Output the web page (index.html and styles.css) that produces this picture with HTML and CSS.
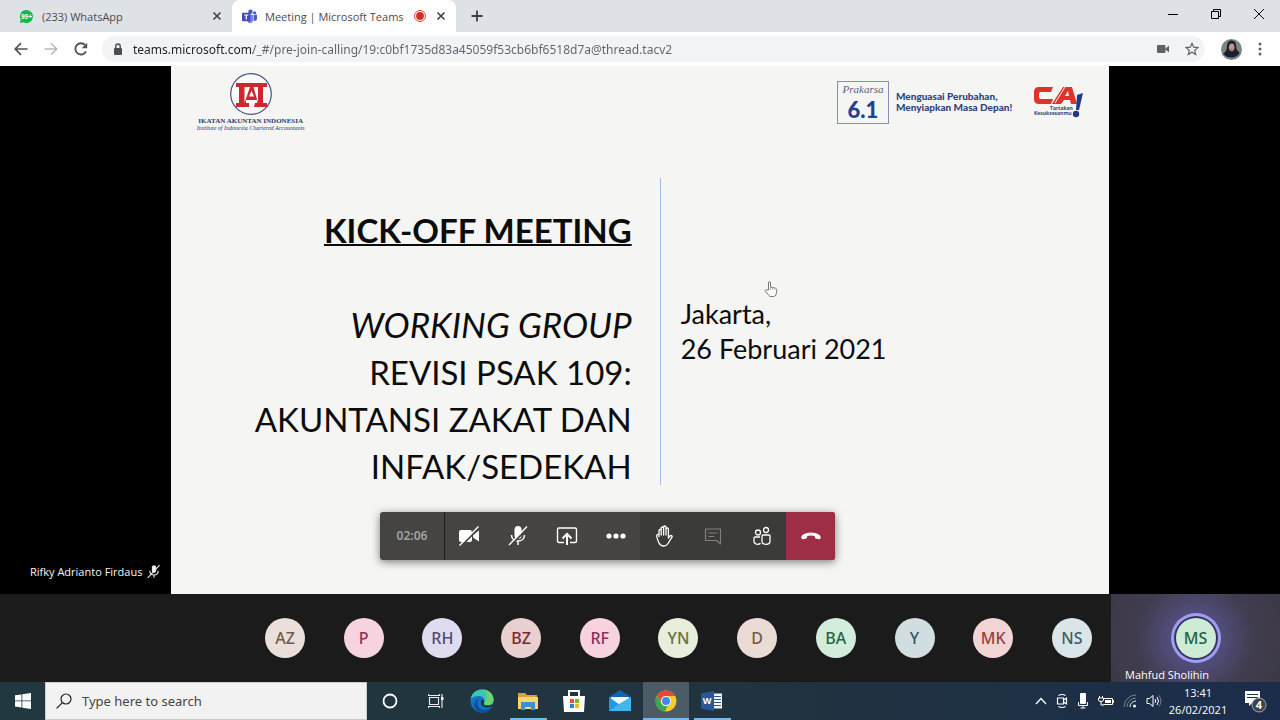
FILE: index.html
```html
<!DOCTYPE html>
<html lang="en">
<head>
  <meta charset="UTF-8">
  <meta name="viewport" content="width=device-width, initial-scale=1.0">
  <title>Meeting | Microsoft Teams</title>
  <link rel="stylesheet" href="styles.css">
</head>
<body>

  <!-- browser tabs -->
  <header class="tab-strip">
    <div class="tab">
      <svg class="tab-icon" viewBox="0 0 16 16"><path d="M8 1a7 7 0 1 1-3.300 13.200L1 15l.9-3.500A7 7 0 0 1 8 1z" fill="#12b84a"/><text x="8" y="11" class="badge-text">99+</text></svg>
      <span class="tab-title">(233) WhatsApp</span>
      <button class="icon-btn" aria-label="Close tab"><svg width="10" height="10" viewBox="0 0 10 10"><path d="M1.500 1.500l7 7m0-7l-7 7" stroke="#3c4043" stroke-width="1.600"/></svg></button>
    </div>
    <div class="tab active">
      <svg class="tab-icon" viewBox="0 0 16 16"><circle cx="9" cy="3" r="2.400" fill="#5059c9"/><circle cx="13.500" cy="4" r="1.700" fill="#5059c9"/><path d="M6 6h6v6a3.500 3.500 0 0 1-6 2z" fill="#7b83eb"/><path d="M12.500 6H16v4.500a2.500 2.500 0 0 1-3.500 2z" fill="#5059c9"/><rect y="4" width="9" height="9" rx="1" fill="#444bb8"/><path d="M2.300 6.400h4.500M4.550 6.400v4.800" stroke="#fff" stroke-width="1.300"/></svg>
      <span class="tab-title">Meeting | Microsoft Teams</span>
      <svg class="rec" width="12" height="12" viewBox="0 0 12 12"><circle cx="6" cy="6" r="5.500" fill="#fff" stroke="#d93025" stroke-width=".9"/><circle cx="6" cy="6" r="3.900" fill="#d32d24"/></svg>
      <button class="icon-btn" aria-label="Close tab"><svg width="10" height="10" viewBox="0 0 10 10"><path d="M1.500 1.500l7 7m0-7l-7 7" stroke="#3c4043" stroke-width="1.600"/></svg></button>
    </div>
    <button class="icon-btn new-tab" aria-label="New tab"><svg width="12" height="12" viewBox="0 0 12 12"><path d="M6 .5v11M.5 6h11" stroke="#3c4043" stroke-width="1.800"/></svg></button>
    <div class="window-btns">
      <button aria-label="Minimize"><svg width="10" height="10" viewBox="0 0 10 10"><path d="M0 5.500h10" stroke="#000"/></svg></button>
      <button aria-label="Restore"><svg width="10" height="10" viewBox="0 0 10 10"><path d="M.5 2.500h7v7h-7zM2.500 2.500v-2h7v7h-2" fill="none" stroke="#000"/></svg></button>
      <button aria-label="Close"><svg width="10" height="10" viewBox="0 0 10 10"><path d="M0 0l10 10M10 0L0 10" stroke="#000"/></svg></button>
    </div>
  </header>

  <nav class="toolbar">
    <button class="icon-btn" aria-label="Back"><svg width="14" height="14" viewBox="0 0 14 14"><path d="M13.500 7H1.500M7 1.200L1.200 7 7 12.800" fill="none" stroke="#505357" stroke-width="1.700"/></svg></button>
    <button class="icon-btn" aria-label="Forward"><svg width="14" height="14" viewBox="0 0 14 14"><path d="M.5 7h12M7 1.200L12.800 7 7 12.800" fill="none" stroke="#b4b6b9" stroke-width="1.500"/></svg></button>
    <button class="icon-btn" aria-label="Reload"><svg width="14" height="14" viewBox="0 0 14 14"><path d="M12 9.300A5.600 5.600 0 1 1 11.200 3.200" fill="none" stroke="#505357" stroke-width="1.800"/><path d="M13.200.8v5.400H7.800z" fill="#505357"/></svg></button>
    <div class="address">
      <svg width="10" height="12" viewBox="0 0 10 12"><rect x="1" y="5" width="8" height="7" rx="1" fill="#4a4d51"/><path d="M2.800 5.500V3.200a2.200 2.200 0 0 1 4.400 0v2.300" fill="none" stroke="#4a4d51" stroke-width="1.400"/></svg>
      <input class="url" type="text" aria-label="Address" value="teams.microsoft.com/_#/pre-join-calling/19:c0bf1735d83a45059f53cb6bf6518d7a@thread.tacv2">
      <button class="icon-btn" aria-label="Camera in use"><svg width="12" height="8" viewBox="0 0 12 8"><rect width="8.500" height="8" rx="1" fill="#5f6368"/><path d="M8 4l4-3.500v7z" fill="#5f6368"/></svg></button>
      <button class="icon-btn" aria-label="Bookmark"><svg width="14" height="14" viewBox="0 0 14 14"><path d="M7 1.300l1.700 3.900 4.200.4-3.200 2.800 1 4.100L7 10.300l-3.700 2.200 1-4.100L1.100 5.600l4.200-.4z" fill="none" stroke="#5f6368" stroke-width="1.200"/></svg></button>
    </div>
    <button class="icon-btn profile" aria-label="Profile"><svg width="21" height="21" viewBox="0 0 21 21"><circle cx="10.500" cy="10.500" r="10.500" fill="#7c8582"/><path d="M10.500 1.500c3.500 0 4.800 3 4.700 7 .2 2.500 2.500 4 3.500 5.500a10.500 10.500 0 0 1-16.500 1C4 13 6 11.500 6 8c0-4 1.500-6.500 4.500-6.500z" fill="#18212d"/><ellipse cx="10.700" cy="8.300" rx="2.800" ry="3.900" fill="#c69783"/><path d="M9 10.300q1.700 1 3.300 0" stroke="#843e3b" fill="none" stroke-width=".7"/></svg></button>
    <button class="icon-btn" aria-label="Menu"><svg width="4" height="14" viewBox="0 0 4 14"><g fill="#5f6368"><circle cx="2" cy="2" r="1.500"/><circle cx="2" cy="7" r="1.500"/><circle cx="2" cy="12" r="1.500"/></g></svg></button>
  </nav>

  <main class="stage">
    <div class="presenter">Rifky Adrianto Firdaus
      <svg width="14" height="15" viewBox="0 0 20 20"><rect x="7" y="1" width="6" height="11" rx="3" fill="#eee"/><path d="M4 9c0 8 12 8 12 0M10 15v4M1 19L18 1" fill="none" stroke="#eee" stroke-width="1.500"/></svg>
    </div>
    <article class="slide">
      <div class="slide-head">
        <div class="iai">
          <svg width="42" height="42" viewBox="0 0 42 42"><circle cx="21" cy="21" r="20.300" fill="#fafafa" stroke="#3f4f83" stroke-width="1.200"/><path d="M6 10h31v4h-4v16h4v4H25v-4h2v-3H16v3h2v4H6v-4h3V14H6z" fill="#cf2730"/><path d="M15.500 14H20L14.500 30V14zM23.500 14H28v16z" fill="#fafafa"/><path d="M21.500 17.500l-2.500 6h5z" fill="#fafafa"/><path d="M18 27h7v7h-7z" fill="#fafafa"/><path d="M16 30h3v4h-4zM25 30h3v4h-4z" fill="#cf2730"/></svg>
          <strong>IKATAN AKUNTAN INDONESIA</strong>
          <em>Institute of Indonesia Chartered Accountants</em>
        </div>
        <div class="prakarsa">
          <em>Prakarsa</em>
          <strong>6.1</strong>
        </div>
        <p class="motto">Menguasai Perubahan,<br>Menyiapkan Masa Depan!</p>
        <div class="ca">
          <svg width="52" height="34" viewBox="0 0 52 34"><path d="M21 1H7Q2 1 2 6v7q0 5 5 5h12l2-5H9q-2 0-2-2V8q0-2 2-2h10z" fill="#df3329"/><path d="M20 18L31 1h9l5 17h-6l-1-4h-6l-3 4zM33 10h4l-1-5z" fill="#df3329"/><path d="M23 17L33 1" stroke="#f5f5f3" stroke-width="1"/><path d="M45 9l6-2-4 17h-3z" fill="#1f3b83"/><circle cx="44" cy="28" r="3.200" fill="#1f3b83"/><text x="18" y="24" class="ca-text">Tortakan</text><text x="2" y="29" class="ca-text">Kesuksesanmu</text></svg>
        </div>
      </div>
      <div class="slide-body">
        <div class="topic">
          <h1>KICK-OFF MEETING</h1>
          <p><i>WORKING GROUP</i><br>REVISI PSAK 109:<br>AKUNTANSI ZAKAT DAN<br>INFAK/SEDEKAH</p>
        </div>
        <p class="place">Jakarta,<br>26 Februari 2021</p>
      </div>
      <svg class="pointer" width="14" height="17" viewBox="0 0 14 17"><path d="M4.500 9V2q0-1.300 1-1.300t1 1.300v4l5 1.200q1.500.5 1.300 2.300l-.8 4q-.5 2-2.500 2H7q-1.300 0-2-1L1 9.700q.5-1.500 2-.8z" fill="#fff" stroke="#777"/><path d="M6.500 6v3M8.800 6.800V9M11 7.400V9" stroke="#999" stroke-width=".7"/></svg>
    </article>

    <div class="controls">
      <time>02:06</time>
      <button aria-label="Turn camera on"><svg width="22" height="22" viewBox="0 0 22 22"><rect x="1" y="5" width="13" height="12" rx="2" fill="#fff"/><path d="M15 9.500L21 5.500v11l-6-4z" fill="#fff"/><path d="M2.500 21.500L21.500 2.500" stroke="#454442" stroke-width="2"/><path d="M1.500 20.500L20.500 1.500" stroke="#fff" stroke-width="1.400"/></svg></button>
      <button aria-label="Unmute"><svg width="22" height="22" viewBox="0 0 22 22"><rect x="7.500" y="1" width="7" height="13" rx="3.500" fill="#fff"/><path d="M4.500 10c0 8 13 8 13 0M11 16v4" fill="none" stroke="#fff" stroke-width="1.500"/><path d="M3 21L21 3" stroke="#454442" stroke-width="1.800"/><path d="M2 20L20 1.500" stroke="#fff" stroke-width="1.400"/></svg></button>
      <button aria-label="Share"><svg width="22" height="22" viewBox="0 0 22 22"><path d="M8 17.500H3q-1.500 0-1.500-1.500V4.500Q1.500 3 3 3h16q1.500 0 1.500 1.500V16q0 1.500-1.500 1.500h-5" fill="none" stroke="#fff" stroke-width="1.400"/><path d="M11 20V9.500M6.500 13.500L11 9l4.500 4.500" fill="none" stroke="#fff" stroke-width="2"/></svg></button>
      <button aria-label="More"><svg width="20" height="6" viewBox="0 0 20 6"><g fill="#fff"><circle cx="3" cy="3" r="2.600"/><circle cx="10" cy="3" r="2.600"/><circle cx="17" cy="3" r="2.600"/></g></svg></button>
      <button class="dark" aria-label="Raise hand"><svg width="20" height="22" viewBox="0 0 20 22"><path d="M5 12V5.500q0-1.200 1.100-1.200T7.200 5.500V10 3.200Q7.200 2 8.400 2t1.200 1.200V10 2.200Q9.600 1 10.800 1T12 2.200V10 4.200Q12 3 13.200 3t1.200 1.200V13l1.500-2q1-1 2.100 0 .4.500 0 1.200l-4 6.300Q12.500 21 9.700 21 6.500 21 5 18q-2-4-2.300-7Q2.600 9 5 9.500" fill="none" stroke="#fff" stroke-width="1.300" stroke-linejoin="round"/></svg></button>
      <button class="dark" aria-label="Chat"><svg width="18" height="18" viewBox="0 0 18 18"><path d="M1.500 2h15v15l-4-3.500h-11zM4.500 6h9M4.500 9.500h6" fill="none" stroke="#817f7d" stroke-width="1.200" stroke-linejoin="round"/></svg></button>
      <button class="dark" aria-label="Participants"><svg width="18" height="20" viewBox="0 0 18 20"><g fill="none" stroke="#fff" stroke-width="1.300"><circle cx="5" cy="6.500" r="2.500"/><circle cx="13" cy="4" r="2.500"/><path d="M7 11H2q-1 0-1 1v3q0 3 3.500 3.300 2 0 3-1"/><path d="M10 9h6q1 0 1 1v5.500q0 2.800-4 2.800t-4-2.800V10q0-1 1-1z"/></g></svg></button>
      <button class="hang-up" aria-label="Leave"><svg width="20" height="8" viewBox="0 0 20 8"><path d="M10 .5q5.500 0 8.500 2.500 2 2 .8 3.600-.5.800-1.500.6l-3-.7q-1-.2-1-1.200V4Q10 3 6.200 4v1.300q0 1-1 1.200l-3 .7q-1 .2-1.500-.6Q-.5 5 1.500 3 4.500.5 10 .5z" fill="#fff"/></svg></button>
    </div>
  </main>

  <section class="roster">
    <ul class="people">
      <li class="avatar sand">AZ</li>
      <li class="avatar pink">P</li>
      <li class="avatar lilac">RH</li>
      <li class="avatar rose">BZ</li>
      <li class="avatar pink">RF</li>
      <li class="avatar lime">YN</li>
      <li class="avatar beige">D</li>
      <li class="avatar mint">BA</li>
      <li class="avatar steel">Y</li>
      <li class="avatar salmon">MK</li>
      <li class="avatar mist">NS</li>
    </ul>
    <div class="speaker">
      <span class="avatar speaking">MS</span>
      <span class="speaker-name">Mahfud Sholihin</span>
    </div>
  </section>

  <footer class="taskbar">
    <button class="start" aria-label="Start"><svg width="16" height="16" viewBox="0 0 16 16"><path d="M0 2.300L6.500 1.400v6.100H0zM7.300 1.300L16 0v7.500H7.300zM0 8.300h6.500v6.200L0 13.600zM7.300 8.300H16V16l-8.700-1.300z" fill="#fff"/></svg></button>
    <label class="search">
      <svg width="16" height="16" viewBox="0 0 16 16"><circle cx="10" cy="6" r="5" fill="none" stroke="#222" stroke-width="1.200"/><path d="M6.400 9.600L.6 15.400" stroke="#222" stroke-width="1.300"/></svg>
      <input type="text" placeholder="Type here to search" aria-label="Search">
    </label>
    <div class="apps">
      <button aria-label="Cortana"><svg width="16" height="16" viewBox="0 0 16 16"><circle cx="8" cy="8" r="6.500" fill="none" stroke="#fff" stroke-width="1.800"/></svg></button>
      <button aria-label="Task view"><svg width="16" height="16" viewBox="0 0 16 16"><path d="M1.500 4.500h9v7h-9zM.5 1v1.500h11V1M.5 15v-1.500h11V15M14 1v14" fill="none" stroke="#eee" stroke-width="1.100"/><rect x="13" y="4" width="2.500" height="3" fill="#fff"/></svg></button>
      <button aria-label="Edge"><svg width="24" height="24" viewBox="0 0 24 24"><circle cx="12" cy="12" r="11.500" fill="#1473c8"/><path d="M.7 10C2 3 7 .5 12 .5c7 0 11.500 5 11.500 10 0 4-3 6-6 6-3 0-4.500-1-3.500-2.500 2-3-.5-7-5-7-4 0-7 1.500-8.300 3z" fill="#3bc6b5"/><path d="M13 .6c6.500.4 10.500 5 10.500 9.900 0 4-3 6-6 6-3 0-4.500-1-3.500-2.500C18 10 18 5 13 .6z" fill="#66d56c"/><path d="M9 10c-3 4-.5 11 5 11 3.500 0 6-1 8-3-2 4-6 5.500-10 5.500C6 23.500 3 18 4.500 14 5.500 11.500 7 10 9 10z" fill="#124f9a"/><path d="M12 10.500c-3 3 0 8 5 8 3 0 4-.7 5-1.300l1.500 1L24 15l-4 1c-4 1-7-.2-6-2 .8-1.300-.5-3.500-2-3.500z" fill="#21363f"/></svg></button>
      <button class="running" aria-label="File Explorer"><svg width="22" height="20" viewBox="0 0 22 20"><path d="M1 2h7l2 2h10v14H1z" fill="#d9a13b"/><path d="M1 6h20v12H1z" fill="#ffd76b"/><path d="M4 11h14v8h-4v-3H8v3H4z" fill="#3d8fd3"/></svg></button>
      <button aria-label="Store"><svg width="22" height="24" viewBox="0 0 22 24"><path d="M6 8V2h10v6" fill="none" stroke="#fff" stroke-width="2"/><path d="M0 7h22l-1 16H1z" fill="#fff"/><path fill="#e94f35" d="M7 10h4v4H7z"/><path fill="#78b82a" d="M12 10h4v4h-4z"/><path fill="#2788d8" d="M7 15h4v4H7z"/><path fill="#f7b719" d="M12 15h4v4h-4z"/></svg></button>
      <button aria-label="Mail"><svg width="24" height="22" viewBox="0 0 24 22"><path d="M1 7L12 0l11 7v14H1z" fill="#1264ad"/><path d="M3 7h18v9H3z" fill="#f3f6f8"/><path d="M1 7l11 8 11-8v14H1z" fill="#2497e2"/><path d="M1 21l10-7 12-7v14z" fill="#41b7f2"/></svg></button>
      <button class="running current" aria-label="Chrome"><svg width="22" height="22" viewBox="0 0 22 22"><circle cx="11" cy="11" r="10.500" fill="#f9ca30"/><path d="M2 5.500a10.500 10.500 0 0 1 18.200.5H11a5 5 0 0 0-4.600 7z" fill="#e5473b"/><path d="M2 5.500L6.500 13.500A5 5 0 0 0 12.500 15.800L10 21.500A10.500 10.500 0 0 1 2 5.500z" fill="#39a853"/><circle cx="11" cy="11" r="5" fill="#fff"/><circle cx="11" cy="11" r="4" fill="#4285ed"/></svg></button>
      <button class="running" aria-label="Word"><svg width="22" height="20" viewBox="0 0 22 20"><path d="M10 2.500h11v15H10z" fill="#f5f7fa"/><path d="M13 5.500h7M13 8.500h7M13 11.500h7M13 14.500h7" stroke="#2b579a" stroke-width="1.200"/><path d="M0 2.500L13 0v20L0 17.500z" fill="#2b579a"/><text x="6" y="13" class="word-text">W</text></svg></button>
    </div>
    <div class="tray">
      <svg width="12" height="12" viewBox="0 0 12 12"><path d="M1 9l5-5.500L11 9" fill="none" stroke="#fff" stroke-width="1.300"/></svg>
      <svg width="12" height="16" viewBox="0 0 12 16"><path d="M1.500 5h6v6h-6zM7.500 7l3-2v6l-3-2M2.500 2.500q3.500-2 7 0M2.500 13.500q3.500 2 7 0" fill="none" stroke="#fff" stroke-width="1.200"/></svg>
      <svg width="12" height="16" viewBox="0 0 12 16"><rect x="3" y="0" width="6" height="11" rx="1" fill="#fff"/><path d="M1.500 9v3.500h9V9M6 12.500V15M3.500 15h5" fill="none" stroke="#fff"/></svg>
      <svg width="16" height="12" viewBox="0 0 16 12"><path d="M5.500 3.500h9v6h-9" fill="none" stroke="#fff"/><path d="M7 5h6v3H7zM14.500 5H16v3h-1.500z" fill="#fff"/><path d="M1.500 1v2M4.500 1v2M.5 3h5v2q0 1.500-2.500 1.500T.5 5zM3 6.500V10h3" fill="none" stroke="#fff"/></svg>
      <svg width="14" height="14" viewBox="0 0 14 14"><g fill="none"><path d="M1 13A12 12 0 0 1 13 1M4 13a9 9 0 0 1 9-9" stroke="#77818f"/><path d="M7 13a6 6 0 0 1 6-6" stroke="#eee"/></g><circle cx="11.500" cy="12" r="1.500" fill="#fff"/></svg>
      <svg width="16" height="14" viewBox="0 0 16 14"><path d="M1 4.500h2.500L7 1.500v11L3.500 9.500H1zM9 5q1.500 2 0 4M11 3q3 4 0 8" fill="none" stroke="#fff"/><path d="M13 1.500q4 5.500 0 11" fill="none" stroke="#7a8698"/></svg>
    </div>
    <div class="clock">13:41<br>26/02/2021</div>
    <button class="notes" aria-label="Notifications, 4 new"><svg width="24" height="24" viewBox="0 0 24 24"><path d="M1 2h15v12H8l-3 3v-3H1z" fill="#fff"/><path d="M3 5.500h11M3 8.500h11" stroke="#1d2f49"/><circle cx="15" cy="16" r="7" fill="#3c434d" stroke="#a0a5ad"/><text x="15" y="20" class="count-text">4</text></svg></button>
  </footer>

</body>
</html>
```
FILE: styles.css
```css
* {
  box-sizing: border-box;
}
body {
  display: flex;
  flex-direction: column;
  height: 100vh;
  margin: 0;
  overflow: hidden;
  font-family: "Noto Sans", "Open Sans", sans-serif;
  font-size: 12px;
  background-color: #000;
}
button {
  display: flex;
  align-items: center;
  justify-content: center;
  padding: 0;
  border: none;
  background: none;
  cursor: pointer;
}
svg {
  flex-shrink: 0;
}
input {
  min-width: 0;
  flex: 1;
  padding: 0;
  border: none;
  outline: none;
  background: none;
  font-family: inherit;
}

/* browser */
.tab-strip {
  display: flex;
  height: 32px;
  background-color: #dee1e6;
}
.tab {
  display: flex;
  align-items: center;
  width: 232px;
  padding: 0 10px 0 19px;
  color: #4a4d51;
}
.tab.active {
  width: 224px;
  padding: 0 10px;
  background-color: #fff;
  border-radius: 8px 8px 0 0;
}
.tab-icon {
  width: 15px;
  height: 15px;
  margin-right: 8px;
}
.tab-title {
  flex: 1;
  font-family: "Open Sans", sans-serif;
  font-size: 11px;
  white-space: nowrap;
}
.rec {
  margin-right: 10px;
}
.badge-text {
  font: bold 7px "Liberation Sans", sans-serif;
  fill: #fff;
  text-anchor: middle;
}
.new-tab {
  padding: 0 15px;
}
.window-btns {
  display: flex;
  margin-left: auto;
}
.window-btns button {
  width: 43px;
  height: 27px;
}
.toolbar {
  display: flex;
  align-items: center;
  gap: 16px;
  height: 34px;
  padding: 0 18px 0 14px;
  background-color: #fff;
}
.address {
  display: flex;
  flex: 1;
  align-items: center;
  gap: 10px;
  height: 26px;
  margin-left: -2px;
  padding: 0 6px 0 11px;
  border-radius: 13px;
  background-color: #f1f3f4;
}
.address .icon-btn {
  margin-left: 6px;
}
.url {
  font-size: 12px;
  color: transparent;
  background-image: linear-gradient(to right, #202124 120px, #5f6368 120px);
  -webkit-background-clip: text;
  background-clip: text;
}

/* shared screen */
.stage {
  position: relative;
  display: flex;
  flex: 1;
  justify-content: center;
  min-height: 0;
  background-color: #000;
}
.presenter {
  position: absolute;
  left: 30px;
  bottom: 15px;
  display: flex;
  align-items: center;
  gap: 5px;
  color: #f4f4f4;
  font-family: "Open Sans", sans-serif;
  font-size: 11px;
}
.slide {
  position: relative;
  display: flex;
  flex-direction: column;
  height: 100%;
  aspect-ratio: 16 / 9;
  background-color: #f5f5f3;
  color: #0c0c0c;
  font-family: Lato, "Open Sans", sans-serif;
}
.slide-head {
  display: flex;
  align-items: flex-start;
  padding: 7px 25px 0 26px;
}
.iai {
  display: flex;
  flex-direction: column;
  align-items: center;
  margin-right: auto;
  color: #26396f;
  font-family: "Liberation Serif", serif;
  font-size: 7px;
  line-height: 7px;
  white-space: nowrap;
}
.iai strong {
  margin-top: 3px;
}
.iai em {
  font-size: 6px;
  line-height: 6px;
}
.prakarsa {
  display: flex;
  flex-direction: column;
  align-items: center;
  width: 52px;
  height: 43px;
  margin-top: 8px;
  border: 1px solid #8690b4;
  color: #23418c;
}
.prakarsa em {
  color: #59627f;
  font: italic 11px/14px "Liberation Serif", serif;
}
.prakarsa strong {
  font-size: 22px;
  font-weight: 900;
  line-height: 27px;
}
.motto {
  margin: 18px 20px 0 7px;
  color: #2d447f;
  font-size: 10px;
  font-weight: 900;
  line-height: 11px;
}
.ca {
  margin-top: 13px;
}
.ca-text {
  font: bold 5px "Open Sans", sans-serif;
  fill: #2c477f;
}
.slide-body {
  display: flex;
  height: 307px;
  margin-top: 47px;
}
.topic {
  width: 490px;
  padding: 29px 28px 0 0;
  border-right: 1px solid #a9b8e6;
  text-align: right;
  font-size: 33px;
  line-height: 47px;
}
.topic h1 {
  margin: 0 0 47px;
  font-size: 33px;
  line-height: 47px;
  text-decoration-thickness: 2px;
  text-decoration-line: underline;
}
.topic p {
  margin: 0;
}
.topic i {
  font-size: 35px;
}
.place {
  margin: 118px 0 0 20px;
  font-size: 27px;
  line-height: 35px;
}
.pointer {
  position: absolute;
  left: 593px;
  top: 215px;
}
.controls {
  position: absolute;
  left: 380px;
  bottom: 34px;
  display: flex;
  width: 455px;
  height: 48px;
  overflow: hidden;
  border-radius: 3px;
  background-color: #454442;
  box-shadow: 0 2px 8px rgba(0, 0, 0, 0.5);
}
.controls time {
  width: 65px;
  border-right: 1px solid #1e1e1d;
  color: #a3a2a0;
  font-weight: 600;
  line-height: 48px;
  text-align: center;
}
.controls button {
  flex: 1;
}
.controls .dark {
  background-color: #3b3b3a;
}
.controls .hang-up {
  background-color: #9e2e45;
}

/* participants */
.roster {
  display: flex;
  justify-content: flex-end;
  height: 88px;
  background-color: #1b1b1b;
}
.people {
  display: flex;
  flex: 1;
  align-items: center;
  justify-content: space-between;
  max-width: 827px;
  margin: 0 19px 0 0;
  padding: 0;
  list-style: none;
}
.avatar {
  width: 40px;
  height: 40px;
  border-radius: 50%;
  font-size: 16px;
  font-weight: 500;
  line-height: 40px;
  text-align: center;
}
.sand {
  background-color: #eadfdb;
  color: #6f5b4d;
}
.pink {
  background-color: #f6d3df;
  color: #8c2f55;
}
.lilac {
  background-color: #dfdcef;
  color: #514c78;
}
.rose {
  background-color: #e9cfd0;
  color: #7c2930;
}
.lime {
  background-color: #e7eedb;
  color: #5d7548;
}
.beige {
  background-color: #eadcd5;
  color: #795746;
}
.mint {
  background-color: #d3eddd;
  color: #286346;
}
.steel {
  background-color: #d1dde0;
  color: #37545f;
}
.salmon {
  background-color: #f1d5d4;
  color: #963f43;
}
.mist {
  background-color: #dae5e9;
  color: #3d5c66;
}
.speaker {
  display: flex;
  flex-direction: column;
  align-items: center;
  width: 169px;
  padding-top: 24px;
  background: radial-gradient(circle at 50% 50%, #57538b 15%, #413d50 60%, #3c3946);
}
.speaking {
  background-color: #cdebd5;
  color: #246140;
  box-shadow: 0 0 0 2px #37355c, 0 0 0 5px #a09df5;
}
.speaker-name {
  align-self: flex-start;
  margin: 9px 0 0 14px;
  color: #fff;
  font-family: "Open Sans", sans-serif;
  font-size: 11px;
  line-height: 16px;
}

/* windows taskbar */
.taskbar {
  display: flex;
  height: 38px;
  background: linear-gradient(to right, #21373f, #21333f 60%, #1b2d4b);
}
.start {
  width: 45px;
}
.search {
  display: flex;
  align-items: center;
  gap: 10px;
  width: 322px;
  padding-left: 10px;
  border: 1px solid #c9cccd;
  background-color: #f2f2f2;
}
.search input {
  font-size: 13px;
}
.search input::placeholder {
  color: #444;
}
.apps {
  display: flex;
}
.apps button {
  width: 46px;
}
.apps .running {
  background: linear-gradient(#76b9ed, #76b9ed) center bottom / 37px 2px no-repeat;
}
.apps .current {
  background-color: #4b5c66;
  background-size: 100% 2px;
}
.word-text {
  font: bold 9px "Open Sans", sans-serif;
  fill: #fff;
  text-anchor: middle;
}
.tray {
  display: flex;
  align-items: center;
  gap: 9px;
  margin-left: auto;
}
.clock {
  width: 68px;
  margin-left: 2px;
  padding-top: 2px;
  color: #fff;
  font-family: "Open Sans", sans-serif;
  font-size: 11px;
  line-height: 17px;
  text-align: center;
  white-space: nowrap;
}
.notes {
  width: 48px;
}
.count-text {
  font: bold 11px "Open Sans", sans-serif;
  fill: #fff;
  text-anchor: middle;
}
```
